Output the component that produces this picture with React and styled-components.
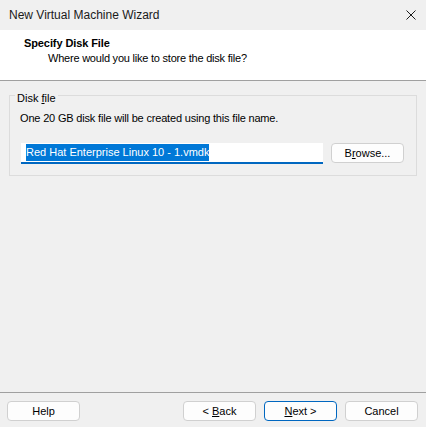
import React from "react";
import styled, { createGlobalStyle } from "styled-components";

const GlobalStyle = createGlobalStyle`
  html, body, #root {
    height: 100%;
  }
  body {
    margin: 0;
    background: #f0f0f0;
    font-family: "Liberation Sans", Arial, sans-serif;
    color: #000;
  }
`;

const App = () => {
  return (
    <>
      <GlobalStyle />
      <Window>
        <TitleBar>
          <WindowTitle>New Virtual Machine Wizard</WindowTitle>
          <CloseButton aria-label="Close">
            <svg width="10" height="10" viewBox="0 0 10 10">
              <path d="M0.5 0.5 L9.5 9.5 M9.5 0.5 L0.5 9.5" stroke="#1b1b1b" strokeWidth="1" fill="none" />
            </svg>
          </CloseButton>
        </TitleBar>

        <Header>
          <PageTitle>Specify Disk File</PageTitle>
          <PageSubtitle>Where would you like to store the disk file?</PageSubtitle>
        </Header>

        <Body>
          <GroupBox>
            <GroupLabel>
              Disk <u>f</u>ile
            </GroupLabel>
            <Description>One 20 GB disk file will be created using this file name.</Description>
            <FileRow>
              <FileInput>
                <Selection>Red Hat Enterprise Linux 10 - 1.vmdk</Selection>
              </FileInput>
              <Button>
                <span>
                  B<u>r</u>owse...
                </span>
              </Button>
            </FileRow>
          </GroupBox>
        </Body>

        <Footer>
          <Button>
            <span>Help</span>
          </Button>
          <Spacer />
          <Button>
            <span>
                &lt; <u>B</u>ack
            </span>
          </Button>
          <Button primary>
            <span>
              <u>N</u>ext &gt;
            </span>
          </Button>
          <Button>
            <span>Cancel</span>
          </Button>
        </Footer>
      </Window>
    </>
  );
};

const Window = styled.div`
  height: 100vh;
  display: flex;
  flex-direction: column;
  background: #f0f0f0;
`;

const TitleBar = styled.div`
  height: 30px;
  flex-shrink: 0;
  display: flex;
  align-items: center;
  padding-left: 9px;
  background: #f0f0f0;
`;

const WindowTitle = styled.div`
  flex: 1;
  font-size: 12px;
  color: #1a1a1a;
`;

const CloseButton = styled.div`
  width: 30px;
  height: 30px;
  display: flex;
  align-items: center;
  justify-content: center;
  padding-bottom: 1px;
  box-sizing: border-box;
`;

const Header = styled.div`
  height: 51px;
  flex-shrink: 0;
  box-sizing: border-box;
  background: #fff;
  border-bottom: 1px solid #a0a0a0;
  padding: 6px 0 0 24px;
  font-size: 11px;
  line-height: 15px;
`;

const PageTitle = styled.div`
  font-weight: bold;
  letter-spacing: -0.1px;
`;

const PageSubtitle = styled.div`
  padding-left: 24px;
  letter-spacing: -0.22px;
`;

const Body = styled.div`
  flex: 1;
  padding: 7px 9px 0 9px;
  font-size: 11px;
  line-height: 15px;
`;

const GroupBox = styled.fieldset`
  margin: 0;
  padding: 0 10px 11px 10px;
  border: 1px solid #dcdcdc;
  min-width: 0;
`;

const GroupLabel = styled.legend`
  padding: 0 2px;
  margin-left: -5px;
  position: relative;
  top: 3px;
  line-height: 15px;
`;

const Description = styled.div`
  margin-top: 8px;
  letter-spacing: -0.18px;
`;

const FileRow = styled.div`
  display: flex;
  align-items: flex-start;
  gap: 8px;
  margin-top: 17px;
  padding-left: 1px;
`;

const FileInput = styled.div`
  flex: 0 0 302px;
  height: 21px;
  box-sizing: border-box;
  background: #fff;
  border-bottom: 2px solid #0067c0;
  padding: 1px 0 0 5px;
  display: flex;
  align-items: flex-start;
  white-space: nowrap;
  overflow: hidden;
`;

const Selection = styled.span`
  background: #0078d7;
  color: #fff;
  line-height: 17px;
`;

const Spacer = styled.div`
  flex: 1;
`;

const Footer = styled.div`
  flex-shrink: 0;
  display: flex;
  align-items: center;
  gap: 8px;
  border-top: 1px solid #a0a0a0;
  padding: 8px 8px 6px 7px;
  font-size: 11px;
`;

const Button = styled.div`
  width: 73px;
  height: 20px;
  box-sizing: border-box;
  display: flex;
  align-items: center;
  justify-content: center;
  background: #fdfdfd;
  border: 1px solid ${(p) => (p.primary ? "#0067c0" : "#d0d0d0")};
  border-radius: 4px;
  font-size: 11px;
  color: #000;
  white-space: pre;
`;

export default App;
